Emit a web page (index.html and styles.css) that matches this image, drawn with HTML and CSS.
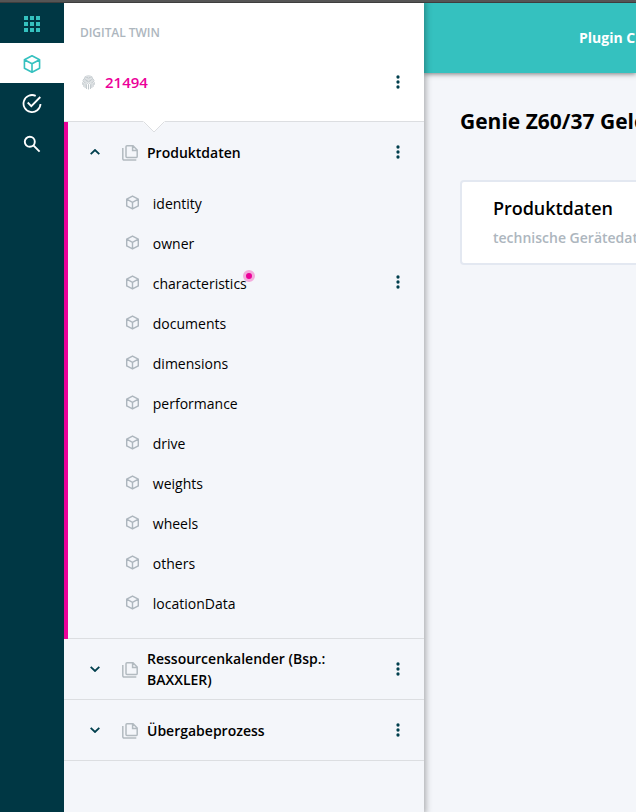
FILE: index.html
```html
<!DOCTYPE html>
<html lang="de">
<head>
<meta charset="utf-8">
<title>Digital Twin</title>
<link rel="stylesheet" href="styles.css">
</head>
<body>
<svg class="defs" aria-hidden="true">
  <symbol id="cube" viewBox="0 0 20 22"><path d="M10 1.5 18.5 6v10L10 20.5 1.5 16V6zM1.5 6 10 10.7 18.5 6M10 10.7v9.8" fill="none" stroke="currentColor" stroke-width="2.1" stroke-linejoin="round"/></symbol>
  <symbol id="pages" viewBox="0 0 16 16"><path d="M5 .8h6l4.2 4.2v6.6a.8.8 0 0 1-.8.8H5a1 1 0 0 1-1-1V1.8a1 1 0 0 1 1-1zM10.6 1v4.4h4.4M.8 3v10.8a1.2 1.2 0 0 0 1.2 1.2h12.3" fill="none" stroke="currentColor" stroke-width="1.5"/></symbol>
  <symbol id="dots" viewBox="0 0 4 14"><circle cx="2" cy="2" r="1.65"/><circle cx="2" cy="7" r="1.65"/><circle cx="2" cy="12" r="1.65"/></symbol>
  <symbol id="chevron" viewBox="0 0 10 6"><path d="M.7.8 5 5 9.3.8" fill="none" stroke="currentColor" stroke-width="1.8"/></symbol>
</svg>
<div class="window-edge"></div>
<div class="app">
  <nav class="rail">
    <a class="rail-item apps"><svg width="16" height="16" viewBox="0 0 16 16" fill="currentColor"><path d="M0 0h4v4H0zM6 0h4v4H6zM12 0h4v4h-4zM0 6h4v4H0zM6 6h4v4H6zM12 6h4v4h-4zM0 12h4v4H0zM6 12h4v4H6zM12 12h4v4h-4z"/></svg></a>
    <a class="rail-item active"><svg width="18" height="20" viewBox="0 0 19 20" fill="none" stroke="currentColor" stroke-width="1.7" stroke-linejoin="round"><path d="m9.5 1.3 8 4.2v9l-8 4.2-8-4.2v-9zM1.5 5.5l8 4.3 8-4.3M9.5 9.8v8.9"/></svg></a>
    <a class="rail-item"><svg width="20" height="20" viewBox="0 0 20 20" fill="none" stroke="currentColor" stroke-width="1.8"><path d="M13.7 1.9A8.5 8.5 0 1 0 18.5 10M5.7 8.5l3.6 3.7 9-9.2"/></svg></a>
    <a class="rail-item"><svg width="18" height="18" viewBox="0 0 18 18" fill="none" stroke="currentColor" stroke-width="1.9"><circle cx="6.8" cy="6.8" r="5"/><path d="m10.4 10.4 6.2 6.2"/></svg></a>
  </nav>
  <aside class="panel">
    <header class="panel-head">
      <div class="panel-label">DIGITAL TWIN</div>
      <div class="twin">
        <svg class="finger" width="13" height="15" viewBox="0 0 14 16" fill="none" stroke="currentColor" stroke-width=".85"><path d="M2.5 2.5Q7-.8 11.5 2.5M.8 6Q2 2.3 7 2.3T13.2 6M.8 10.5V8Q1.8 3.8 7 3.8T13.2 8v2.5M2 12.7V9Q2.5 5.3 7 5.3T12 9v3.7M3.4 14V9.2Q3.7 6.8 7 6.8t3.6 2.4V14M4.9 15V10Q5 8.3 7 8.3T9.1 10v5M7 9.8v5.7"/></svg>
        <span class="twin-id">21494</span>
        <svg class="dots"><use href="#dots"/></svg>
      </div>
      <svg class="notch" width="22" height="12" viewBox="0 0 22 12"><path class="notch-fill" d="M0 0h22v1L11 11 0 1z"/><path class="notch-line" d="M.5.5 11 11 21.5.5"/></svg>
    </header>
    <section class="group open">
      <div class="group-head">
        <svg class="chevron"><use href="#chevron"/></svg><svg class="pages"><use href="#pages"/></svg>
        <span class="group-title">Produktdaten</span><svg class="dots"><use href="#dots"/></svg>
      </div>
      <ul class="items">
        <li><svg class="cube"><use href="#cube"/></svg><span>identity</span></li>
        <li><svg class="cube"><use href="#cube"/></svg><span>owner</span></li>
        <li><svg class="cube"><use href="#cube"/></svg><span class="marked">characteristics<i class="marker"></i></span><svg class="dots"><use href="#dots"/></svg></li>
        <li><svg class="cube"><use href="#cube"/></svg><span>documents</span></li>
        <li><svg class="cube"><use href="#cube"/></svg><span>dimensions</span></li>
        <li><svg class="cube"><use href="#cube"/></svg><span>performance</span></li>
        <li><svg class="cube"><use href="#cube"/></svg><span>drive</span></li>
        <li><svg class="cube"><use href="#cube"/></svg><span>weights</span></li>
        <li><svg class="cube"><use href="#cube"/></svg><span>wheels</span></li>
        <li><svg class="cube"><use href="#cube"/></svg><span>others</span></li>
        <li><svg class="cube"><use href="#cube"/></svg><span>locationData</span></li>
      </ul>
    </section>
    <section class="group">
      <div class="group-head">
        <svg class="chevron"><use href="#chevron"/></svg><svg class="pages"><use href="#pages"/></svg>
        <span class="group-title two-line">Ressourcenkalender (Bsp.: BAXXLER)</span><svg class="dots"><use href="#dots"/></svg>
      </div>
    </section>
    <section class="group">
      <div class="group-head">
        <svg class="chevron"><use href="#chevron"/></svg><svg class="pages"><use href="#pages"/></svg>
        <span class="group-title">Übergabeprozess</span><svg class="dots"><use href="#dots"/></svg>
      </div>
    </section>
  </aside>
  <main class="content">
    <header class="topbar">Plugin C</header>
    <div class="page">
      <h1>Genie Z60/37 Gele</h1>
      <article class="card">
        <h2>Produktdaten</h2>
        <p>technische Gerätedat</p>
      </article>
    </div>
  </main>
</div>
</body>
</html>
```

FILE: styles.css
```css
* { box-sizing: border-box; }
body {
  margin: 0;
  height: 812px;
  overflow: hidden;
  display: flex;
  flex-direction: column;
  background: #f4f6fa;
  color: #000;
  font: 14px/20px "Open Sans", sans-serif;
}
svg { display: block; flex: none; }
.defs { position: absolute; width: 0; height: 0; }
.window-edge { flex: none; height: 3px; background: #555; border-bottom: 1px solid #3e3e3e; }
.app { flex: 1; display: flex; min-height: 0; }

.rail { flex: none; width: 64px; background: #003744; color: #fff; }
.rail-item { height: 40px; padding-top: 1px; display: flex; align-items: center; justify-content: center; }
.rail-item.apps { color: #35c1bf; }
.rail-item.active { background: #fff; color: #35c1bf; }

.panel {
  position: relative;
  z-index: 2;
  flex: none;
  width: 360px;
  background: #f4f6fa;
  box-shadow: 0 0 6px 2px rgba(0, 0, 0, .3);
  clip-path: inset(0 -12px 0 0);
}
.panel-head {
  position: relative;
  height: 119px;
  padding: 20px 24px 0 16px;
  background: #fff;
  border-bottom: 1px solid #dcdee1;
}
.panel-label { color: #adb6be; font-size: 12px; font-weight: 600; letter-spacing: -.05px; }
.twin { display: flex; align-items: center; height: 20px; margin-top: 29px; }
.finger { margin: 1px 10px 0 2px; color: #b2bac0; }
.twin-id { flex: 1; color: #ec0099; font-size: 15px; font-weight: 600; }
.notch { position: absolute; left: 79px; top: 118px; z-index: 1; }
.notch-fill { fill: #fff; }
.notch-line { fill: none; stroke: #dcdee1; }
.dots { width: 4px; height: 14px; margin-top: -1px; fill: #003f4d; }

.group { border-bottom: 1px solid #dcdee1; }
.group-head { display: flex; align-items: center; height: 60px; padding: 0 24px 0 26px; }
.chevron { width: 10px; height: 6px; margin-top: -1px; color: #003f4d; }
.pages { width: 16px; height: 16px; margin: 2px 9px 0 22px; color: #b2bac0; }
.group-title { width: 190px; margin-right: auto; padding-top: 1px; font-weight: 600; line-height: 21px; }
.two-line { padding: 0 0 1px; }
.open { position: relative; height: 517px; }
.open::before { content: ""; position: absolute; left: 0; top: 0; bottom: -1px; width: 4px; background: #ec0099; }
.open .chevron { transform: rotate(180deg); }
.items { margin: 1px 0 0; padding: 0; list-style: none; }
.items li { display: flex; align-items: center; height: 40px; padding: 0 24px 0 61px; }
.items span { margin-right: auto; padding-top: 1px; }
.items .dots { margin-top: -3px; }
.cube { width: 15px; height: 15px; margin: -1px 12.8px 0 0; color: #adb6be; }
.marked { position: relative; }
.marker {
  position: absolute;
  right: -8px;
  top: -3px;
  width: 12px;
  height: 12px;
  border: 3px solid #f3abdc;
  border-radius: 50%;
  background: #ec0099;
}

.content { flex: 1; min-width: 0; overflow: hidden; }
.topbar {
  height: 70px;
  padding: 25px 0 0 155px;
  background: #35c1bf;
  box-shadow: 0 1px 5px rgba(0, 0, 0, .5);
  color: #fff;
  font-weight: 700;
  white-space: nowrap;
}
.page { width: 560px; padding: 32px 36px 0; }
h1 { margin: 0; font-size: 21px; line-height: 32px; font-weight: 700; white-space: nowrap; }
.card { height: 85px; margin-top: 43px; padding: 14px 31px; border: 2px solid #e3e8f1; border-radius: 4px; background: #fff; }
.card h2 { margin: 0; font-size: 18px; line-height: 24px; font-weight: 600; letter-spacing: -.05px; }
.card p { margin: 8px 0 0; color: #adb6be; font-weight: 600; white-space: nowrap; }
```
